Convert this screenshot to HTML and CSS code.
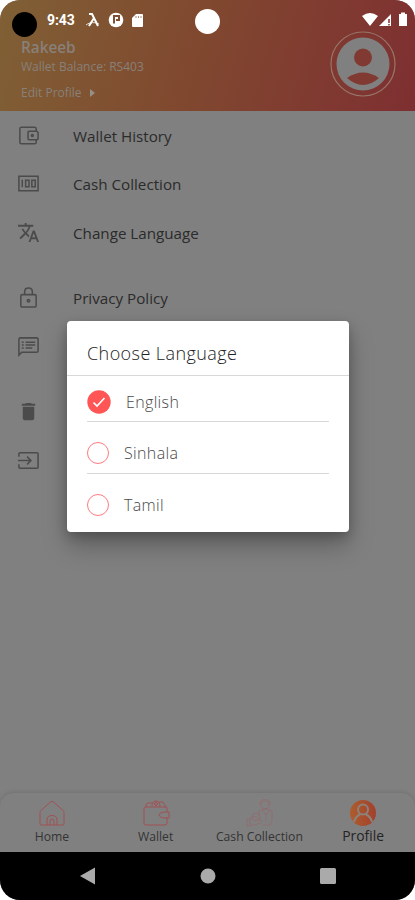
FILE: index.html
```html
<!DOCTYPE html>
<html lang="en">
<head>
<meta charset="utf-8">
<title>Profile</title>
<link rel="stylesheet" href="styles.css">
</head>
<body>
<div class="phone">
  <header class="header">
    <div class="status">
      <span class="avatar-dot"></span>
      <span class="time">9:43</span>
      <svg class="status-left" viewBox="0 0 62 18"><g fill="none" stroke="#fff"><path d="M4 3h3l6 12M9 7l-5 8" stroke-width="2"/><path d="M1 14c4-3 9-3 13-1" stroke-width=".8"/></g><circle cx="31" cy="9" r="7.3" fill="#fff"/><path d="M29 12.500V5h5v4h-3" fill="none" stroke="#7f5034" stroke-width="2"/><path d="M51 3h6q1 0 1 1v11q0 1-1 1h-9q-1 0-1-1V7z" fill="#fff"/><path d="M51 5v2m2.500-2v2m2.500-2v2" stroke="#a98977"/></svg>
      <span class="camera"></span>
      <svg class="status-right" viewBox="0 0 48 18"><path d="M1 5q8-6 16 0L9 15zM18 15L30 3v12z" fill="#fff"/><path d="M28 8v4m0 1v1.500" stroke="#7e2f31" stroke-width="1.500"/><path d="M38 3h2V1.500h4V3h2v12h-8z" fill="#fff"/></svg>
    </div>
    <div class="account">
      <div class="details">
        <div class="name">Rakeeb</div>
        <div class="balance">Wallet Balance: RS403</div>
        <div class="edit">Edit Profile <i class="arrow"></i></div>
      </div>
      <svg class="avatar" viewBox="0 0 66 66"><circle cx="33" cy="33" r="32" fill="none" stroke="#96766a" stroke-width="1.200"/><circle cx="33" cy="33" r="26.500" fill="#808080"/><circle cx="33" cy="26.500" r="9" fill="#803a31"/><path d="M17 47q16-11 32 0-16 14-32 0z" fill="#803a31"/></svg>
    </div>
  </header>
  <main class="menu">
    <div class="row"><svg class="icon" viewBox="0 0 24 24"><path d="M20 7V5q0-1.500-1.500-1.500h-14Q3 3.500 3 5v14q0 1.500 1.500 1.500h14Q20 20.500 20 19v-2M12.500 7.500H20q2 0 2 2v5q0 2-2 2h-7.500q-1 0-1-1v-7q0-1 1-1z"/><circle cx="16" cy="12" r="1"/></svg><span>Wallet History</span></div>
    <div class="row"><svg class="icon" viewBox="0 0 24 24"><path d="M2 4.500h20v15H2zM5.500 8v8M9 8.500h3.500v7H9zM15.500 8.500H19v7h-3.500z"/></svg><span>Cash Collection</span></div>
    <div class="row"><svg class="icon solid" viewBox="0 0 24 24"><path d="M12.870 15.070l-2.540-2.510.030-.030A17.520 17.520 0 0 0 14.070 6H17V4h-7V2H8v2H1v2h11.170C11.500 7.920 10.440 9.750 9 11.350 8.070 10.320 7.300 9.190 6.690 8h-2c.730 1.630 1.730 3.170 2.980 4.560l-5.090 5.020L4 19l5-5 3.110 3.110.760-2.040zM18.500 10h-2L12 22h2l1.120-3h4.750L21 22h2zm-2.620 7l1.620-4.330L19.120 17z"/></svg><span>Change Language</span></div>
    <div class="row spaced"><svg class="icon" viewBox="0 0 24 24"><path d="M5.500 9h13Q20 9 20 10.500v10Q20 22 18.500 22h-13Q4 22 4 20.500v-10Q4 9 5.500 9zM8 9V6q0-4 4-4t4 4v3"/><circle cx="12" cy="15.500" r="1.300"/></svg><span>Privacy Policy</span></div>
    <div class="row"><svg class="icon" viewBox="0 0 24 24"><path d="M2 21V4.500Q2 3 3.500 3h17Q22 3 22 4.500v12q0 1.500-1.500 1.500H5zM5 7.500h2M5 10.500h2M5 13.500h2M9 7.500h10M9 10.500h10M9 13.500h7"/></svg></div>
    <div class="row spaced"><svg class="icon solid" viewBox="0 0 24 24"><path d="M6 19c0 1.100.9 2 2 2h8c1.100 0 2-.9 2-2V7H6zM19 4h-3.500l-1-1h-5l-1 1H5v2h14z"/></svg></div>
    <div class="row"><svg class="icon" viewBox="0 0 24 24"><path d="M2 8V5q0-1 1-1h18q1 0 1 1v14q0 1-1 1H3q-1 0-1-1v-3M1 12h13M10.500 8l4 4-4 4"/></svg></div>
  </main>
  <nav class="tabs">
    <div class="tab"><svg viewBox="0 0 28 28"><path d="M2 25V13.500q0-1 1-2L12.500 3q1.500-1.200 3 0l9.500 8.500q1 1 1 2V25q0 1-1 1H3q-1 0-1-1zM9 26v-5q0-4.500 5-4.500t5 4.500v5M12 26v-4q0-2 2-2t2 2v4"/></svg><span>Home</span></div>
    <div class="tab"><svg viewBox="0 0 28 28"><path d="M25 13V9q0-1-1-1H3Q2 8 2 10v14q0 2 2 2h19q2 0 2-2v-6M27 13h-5q-4 0-5 3 1 3 5 3h5zM4 8q-1-3 2-4h5M10 7q0-5 4-5t4 6M17 3h4l3 5"/><circle cx="14" cy="5" r="1.500"/></svg><span>Wallet</span></div>
    <div class="tab cash"><svg viewBox="0 0 28 28"><circle cx="20" cy="6" r="4"/><path d="M15 6V3q5-5 10 0v3M14 12q6-4 13 0v9q0 2-2 5h-7M17 11l4 5 4-5M14 12v5M21 16v7M2 20h3v7H2zM5 20q5-5 8 0l3 1q2 2-1 3l-5 2H5"/><circle cx="11" cy="18" r="4"/></svg><span>Cash Collection</span></div>
    <div class="tab active"><svg viewBox="0 0 28 28"><defs><linearGradient id="orange" x1="0" x2="1"><stop stop-color="#ad5d2d"/><stop offset="1" stop-color="#a2402d"/></linearGradient></defs><circle cx="14" cy="14" r="13" fill="url(#orange)" stroke="none"/><circle class="outline" cx="14" cy="10.500" r="5"/><path class="outline" d="M5 23q1-5 6.500-8M23 23q-1-5-6.500-8"/></svg><span>Profile</span></div>
  </nav>
  <footer class="system">
    <svg viewBox="0 0 18 18"><path d="M1 9L16 .5v17z"/></svg>
    <svg viewBox="0 0 18 18"><circle cx="9" cy="9" r="7.500"/></svg>
    <svg viewBox="0 0 18 18"><rect x="1" y="1" width="16" height="16" rx="1.500"/></svg>
  </footer>
  <section class="dialog">
    <h1>Choose Language</h1>
    <div class="options">
      <div class="option chosen"><svg viewBox="0 0 24 24"><circle cx="12" cy="12" r="11.700"/><path d="M6.500 12.500l3.500 3.500 7.500-8"/></svg><span>English</span></div>
      <div class="option"><i class="radio"></i><span>Sinhala</span></div>
      <div class="option"><i class="radio"></i><span>Tamil</span></div>
    </div>
  </section>
</div>
</body>
</html>
```
FILE: styles.css
```css
* { box-sizing: border-box; }
body { margin: 0; background: #fff; font-family: "Open Sans", "Noto Sans", sans-serif; }
.phone { position: relative; display: flex; flex-direction: column; width: 415px; height: 900px; overflow: hidden; border-radius: 20px; background: #808080; }
.header { height: 111px; flex: none; background: linear-gradient(105deg, #806035 0%, #80482f 47%, #803a31 77%, #7e2f31 100%); }
.status { display: flex; height: 37px; padding: 8px 6px 0 12px; align-items: flex-start; }
.avatar-dot, .camera { flex: none; width: 25px; height: 25px; border-radius: 50%; background: #000; }
.avatar-dot { margin-top: 4px; }
.time { width: 29px; margin: 4px 0 0 10px; color: #fff; font: 700 14px/17px Roboto, sans-serif; letter-spacing: -.1px; white-space: nowrap; }
.status-left { width: 62px; height: 18px; margin: 3px 0 0 9px; }
.camera { margin: 1px 0 0 48px; background: #fff; }
.status-right { width: 48px; height: 18px; margin: 3px 0 0 auto; }
.account { display: flex; justify-content: space-between; padding: 0 19px 0 21px; color: #888079; }
.name { font-size: 15.3px; line-height: 20px; font-weight: 600; }
.balance { margin-top: 1px; font-size: 12px; line-height: 18px; }
.edit { display: flex; align-items: center; gap: 8px; margin-top: 8px; font-size: 12px; line-height: 18px; }
.arrow { border: solid transparent; border-width: 4px 0 4px 5px; border-left-color: #929087; }
.avatar { width: 66px; height: 66px; margin-top: -6px; }
.menu { flex: 1; }
.row { display: flex; align-items: center; height: 48.5px; padding-left: 17px; gap: 32px; color: #2b2b2b; font-size: 15.2px; }
.row span { margin-top: 1px; }
.spaced { margin-top: 17px; }
.icon { width: 23px; height: 23px; margin-right: 1px; fill: none; stroke: #4b4b4b; stroke-width: 1.6; }
.solid { fill: #4b4b4b; stroke: none; }
.tabs { display: grid; grid-template-columns: repeat(4, 1fr); height: 59px; padding-top: 6px; border-radius: 14px 14px 0 0; background: #808080; box-shadow: 0 -1px 4px rgba(0,0,0,.12); }
.tab { display: flex; flex-direction: column; align-items: center; color: #343434; font-size: 12.2px; line-height: 20px; white-space: nowrap; }
.tab svg { width: 28px; height: 28px; fill: none; stroke: #a25054; stroke-width: 1; }
.tab.cash svg { stroke: #94696c; stroke-width: .7; }
.tab .outline { fill: none; stroke: #8d827a; stroke-width: 2; }
.tab.active { color: #242424; font-size: 13.9px; line-height: 18px; }
.system { display: flex; align-items: center; justify-content: center; gap: 102px; height: 48px; background: #000; }
.system svg { width: 18px; height: 18px; fill: #aaa; }
.dialog { position: absolute; left: 67px; top: 321px; width: 282px; height: 211px; border-radius: 4px; background: #fff; box-shadow: 0 14px 24px rgba(0,0,0,.26), 0 4px 12px rgba(0,0,0,.2); }
.dialog h1 { margin: 0; height: 55px; padding: 19px 20px 0; border-bottom: 1px solid #d8d8d8; color: #222; font-size: 18px; line-height: 26px; font-weight: 300; letter-spacing: .42px; }
.options { padding: 0 20px; }
.option { display: flex; align-items: center; height: 52px; padding-top: 10px; gap: 15px; border-bottom: 1px solid #d8d8d8; color: #484848; font-size: 16px; font-weight: 300; letter-spacing: .35px; }
.option:first-child { height: 46px; padding-top: 6px; }
.option:last-child { border-bottom: 0; }
.option svg { width: 24px; height: 24px; fill: #ff5555; }
.option svg path { fill: none; stroke: #fff; stroke-width: 1.7; }
.radio { width: 22px; height: 22px; border: 1px solid #ff7c81; border-radius: 50%; }
```
